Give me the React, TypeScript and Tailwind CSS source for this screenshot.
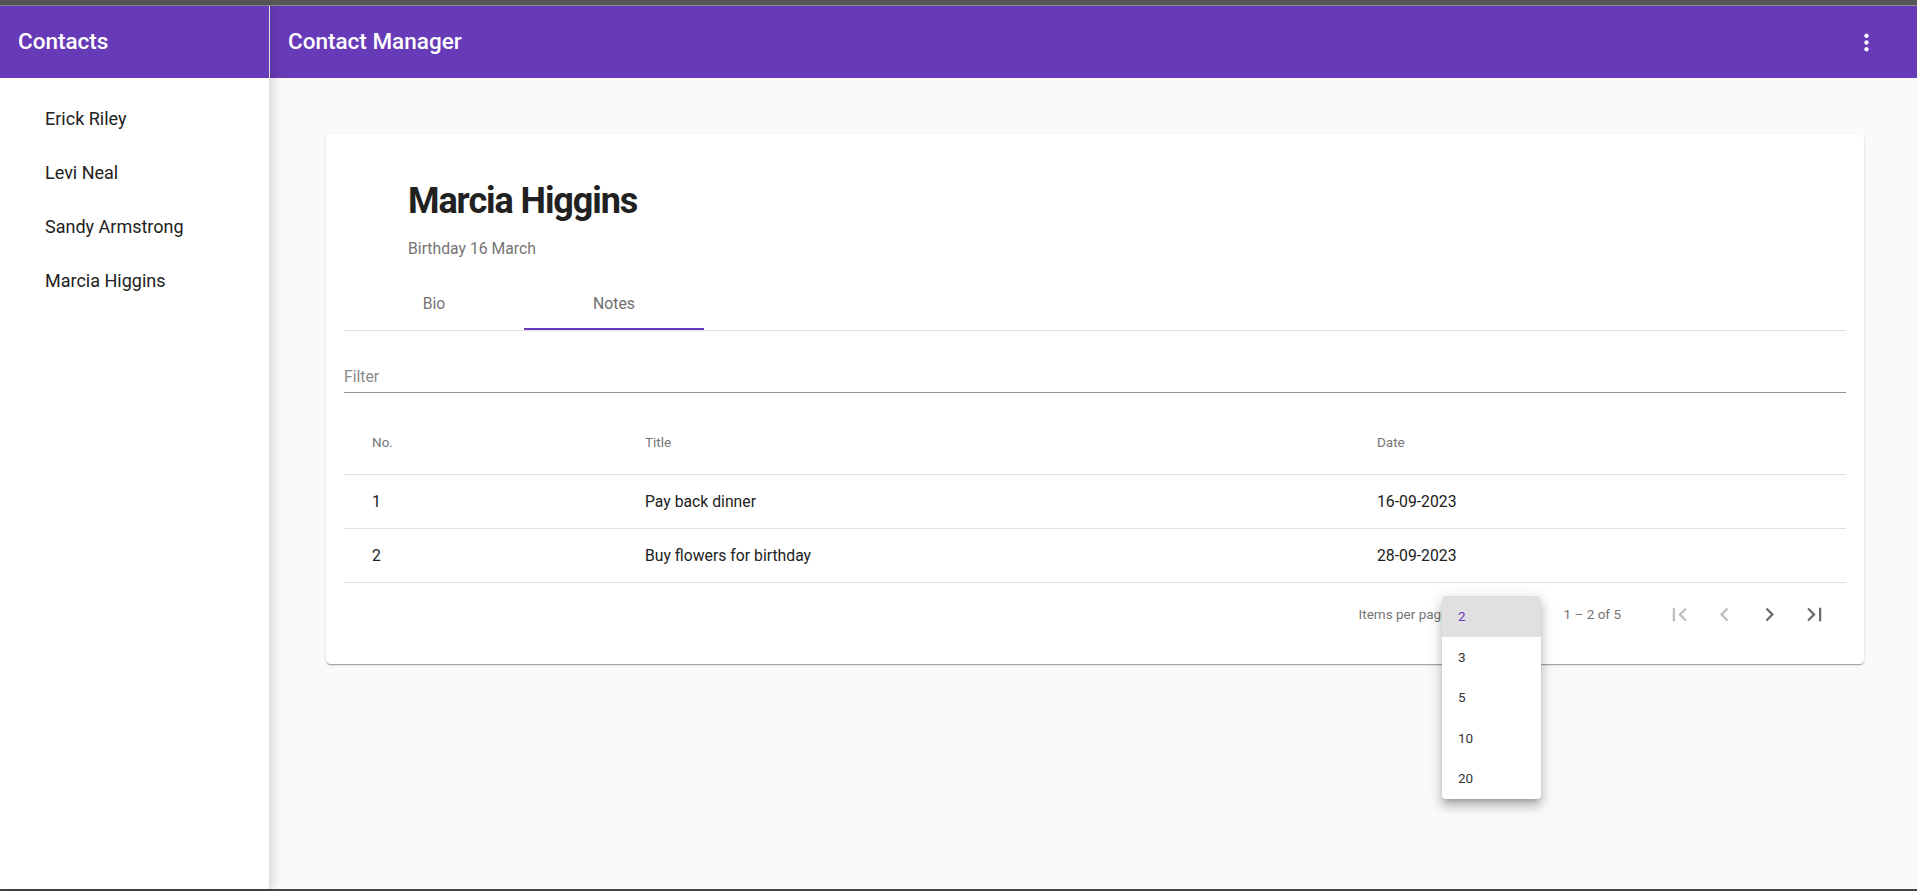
import React from "react";

const names = ["Erick Riley", "Levi Neal", "Sandy Armstrong", "Marcia Higgins"];
const rows = [
  { no: "1", title: "Pay back dinner", date: "16-09-2023" },
  { no: "2", title: "Buy flowers for birthday", date: "28-09-2023" },
];

function Icon({ d, className }: { d: string; className?: string }) {
  return (
    <svg viewBox="0 0 24 24" width="27" height="27" className={className} fill="currentColor">
      <path d={d} />
    </svg>
  );
}

export default function App() {
  return (
    <div className="relative h-[891px] w-[1917px] overflow-hidden flex flex-col bg-[#fafafa] font-['Roboto',sans-serif]">
      <div className="h-[5px] bg-[#575757] shrink-0" />
      <div className="h-[1px] bg-[#8c8c8c] shrink-0" />
      <div className="flex flex-1 min-h-0">
        <aside className="relative z-10 w-[270px] shrink-0 bg-white border-r border-[#e0e0e0] shadow-[2px_0_10px_rgba(0,0,0,0.16)] flex flex-col">
          <div className="h-[72px] bg-[#673ab7] flex items-center pl-[18px] text-white text-[22.5px] font-medium">
            Contacts
          </div>
          <nav className="pt-[13px]">
            {names.map((n) => (
              <div key={n} className="h-[54px] flex items-center pl-[45px] text-[18px] text-[#212121]">
                {n}
              </div>
            ))}
          </nav>
        </aside>
        <main className="flex-1 flex flex-col min-w-0">
          <header className="h-[72px] shrink-0 bg-[#673ab7] flex items-center justify-between pl-[18px] pr-[28px] text-white">
            <span className="text-[22.5px] font-medium">Contact Manager</span>
            <button className="w-[45px] h-[45px] flex items-center justify-center">
              <Icon d="M12 8c1.1 0 2-.9 2-2s-.9-2-2-2-2 .9-2 2 .9 2 2 2zm0 2c-1.1 0-2 .9-2 2s.9 2 2 2 2-.9 2-2-.9-2-2-2zm0 6c-1.1 0-2 .9-2 2s.9 2 2 2 2-.9 2-2-.9-2-2-2z" />
            </button>
          </header>
          <div className="pl-[56px] pr-[53px] pt-[56px]">
            <section className="bg-white rounded-[4.5px] p-[18px] shadow-[0_2px_1px_-1px_rgba(0,0,0,0.2),0_1px_1px_0_rgba(0,0,0,0.14),0_1px_3px_0_rgba(0,0,0,0.12)]">
              <div className="pl-[64px] pt-[29px]">
                <h1 className="text-[36px] leading-[40px] font-bold tracking-[-0.03em] text-[#212121]">Marcia Higgins</h1>
                <p className="mt-[15.5px] text-[15.75px] leading-[24px] text-[#757575]">Birthday 16 March</p>
              </div>
              <div className="mt-[16.5px] flex h-[53px] border-b border-[#e0e0e0] box-content">
                <div className="w-[180px] flex items-center justify-center text-[15.75px] text-[#757575]">Bio</div>
                <div className="relative w-[180px] flex items-center justify-center text-[15.75px] text-[#6e6e6e]">
                  Notes
                  <div className="absolute left-0 right-0 bottom-0 h-[2px] bg-[#673ab7]" />
                </div>
              </div>
              <div className="h-[62px] flex items-end pb-[5px] border-b border-[#949494]">
                <span className="text-[15.75px] leading-[20px] text-[#8a8a8a]">Filter</span>
              </div>
              <div className="mt-[18px]">
                <div className="grid grid-cols-[301px_732px_1fr] h-[64px] items-center border-b border-[#e0e0e0] text-[13.5px] font-normal text-[#757575]">
                  <div className="pl-[28px]">No.</div>
                  <div>Title</div>
                  <div>Date</div>
                </div>
                {rows.map((r) => (
                  <div key={r.no} className="grid grid-cols-[301px_732px_1fr] h-[54px] items-center border-b border-[#e0e0e0] text-[15.75px] text-[#212121]">
                    <div className="pl-[28px]">{r.no}</div>
                    <div>{r.title}</div>
                    <div>{r.date}</div>
                  </div>
                ))}
              </div>
              <div className="h-[63px] flex items-center justify-end pr-[9px] text-[13.5px] text-[#757575]">
                <div className="w-[84px] whitespace-nowrap">Items per page:</div>
                <div className="w-[94px] flex items-center justify-between pl-[18px] pr-[8px] text-[#212121]">
                  <span>2</span>
                </div>
                <div className="ml-[27px] mr-[36px] whitespace-nowrap">1 – 2 of 5</div>
                <div className="flex">
                  <button className="w-[45px] h-[45px] flex items-center justify-center text-[#bdbdbd]">
                    <Icon d="M18.41 16.59L13.82 12l4.59-4.59L17 6l-6 6 6 6zM6 6h2v12H6z" />
                  </button>
                  <button className="w-[45px] h-[45px] flex items-center justify-center text-[#bdbdbd]">
                    <Icon d="M15.41 7.41L14 6l-6 6 6 6 1.41-1.41L10.83 12z" />
                  </button>
                  <button className="w-[45px] h-[45px] flex items-center justify-center text-[#6b6b6b]">
                    <Icon d="M10 6L8.59 7.41 13.17 12l-4.58 4.59L10 18l6-6z" />
                  </button>
                  <button className="w-[45px] h-[45px] flex items-center justify-center text-[#6b6b6b]">
                    <Icon d="M5.59 7.41L10.18 12l-4.59 4.59L7 18l6-6-6-6zM16 6h2v12h-2z" />
                  </button>
                </div>
              </div>
            </section>
          </div>
        </main>
      </div>
      <div className="h-[2px] bg-[#444] shrink-0" />

      <div className="absolute left-[1442px] top-[596px] w-[99px] bg-white rounded-[4px] overflow-hidden z-20 shadow-[0_5px_5px_-3px_rgba(0,0,0,0.2),0_8px_10px_1px_rgba(0,0,0,0.14),0_3px_14px_2px_rgba(0,0,0,0.12)]">
        {["2", "3", "5", "10", "20"].map((v, i) => (
          <div
            key={v}
            className={
              i === 0
                ? "h-[40.5px] flex items-center pl-[16px] text-[13.5px] bg-[#e0e0e0] text-[#673ab7]"
                : "h-[40.5px] flex items-center pl-[16px] text-[13.5px] text-[#333333]"
            }
          >
            {v}
          </div>
        ))}
      </div>
    </div>
  );
}
